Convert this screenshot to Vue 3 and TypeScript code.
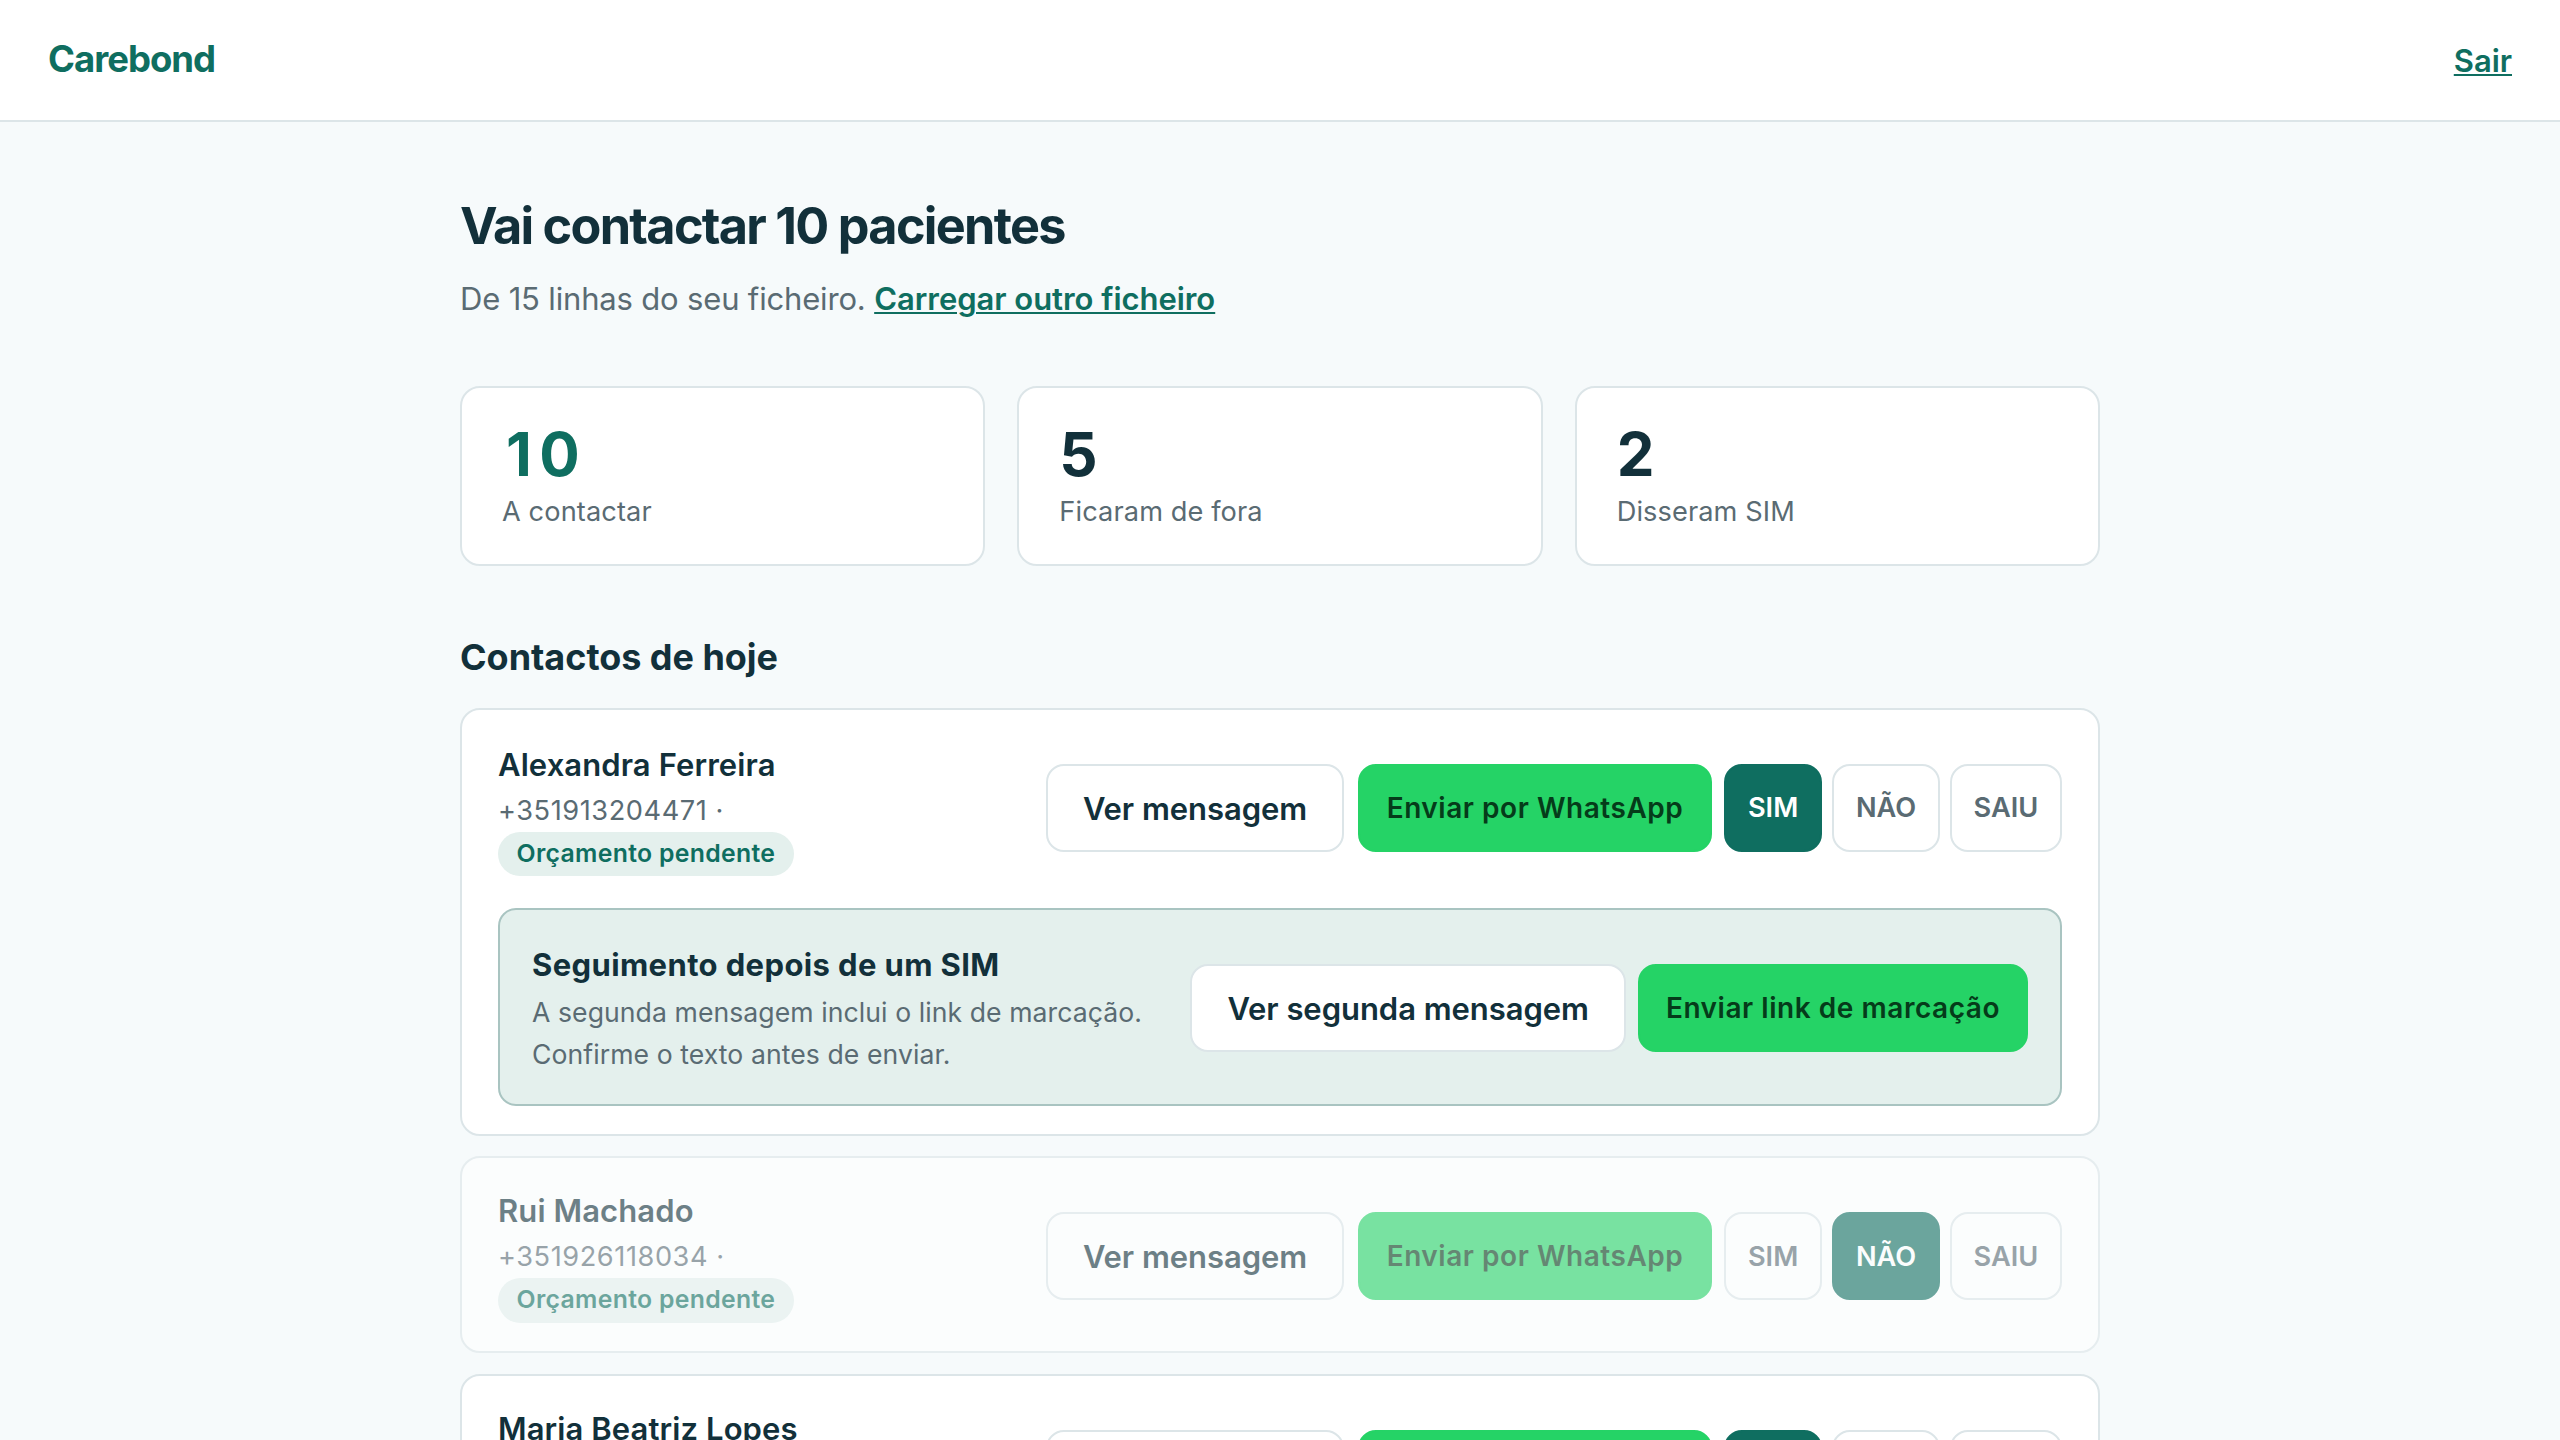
<script setup lang="ts">
interface Contact {
  name: string
  phone: string
  reason: string
  answer: 'SIM' | 'NÃO' | 'SAIU'
  followUp?: boolean
  done?: boolean
}

const stats = [
  { value: 10, label: 'A contactar', accent: true },
  { value: 5, label: 'Ficaram de fora', accent: false },
  { value: 2, label: 'Disseram SIM', accent: false },
]

const answers = ['SIM', 'NÃO', 'SAIU'] as const

const contacts: Contact[] = [
  { name: 'Alexandra Ferreira', phone: '+351913204471', reason: 'Orçamento pendente', answer: 'SIM', followUp: true },
  { name: 'Rui Machado', phone: '+351926118034', reason: 'Orçamento pendente', answer: 'NÃO', done: true },
  { name: 'Maria Beatriz Lopes', phone: '', reason: '', answer: 'SIM' },
]
</script>

<template>
  <div class="page">
    <header class="topbar">
      <span class="brand">Carebond</span>
      <a class="link logout">Sair</a>
    </header>

    <main class="content">
      <h1>Vai contactar 10 pacientes</h1>
      <p class="lead">De 15 linhas do seu ficheiro. <a class="link">Carregar outro ficheiro</a></p>

      <section class="stats">
        <div v-for="s in stats" :key="s.label" class="stat">
          <div class="stat-value" :class="{ accent: s.accent }">{{ s.value }}</div>
          <div class="stat-label">{{ s.label }}</div>
        </div>
      </section>

      <h2>Contactos de hoje</h2>

      <section class="list">
        <article
          v-for="c in contacts"
          :key="c.name"
          class="card"
          :class="{ done: c.done, expanded: c.followUp }"
        >
          <div class="row">
            <div class="who">
              <div class="name">{{ c.name }}</div>
              <div v-if="c.phone" class="phone">{{ c.phone }} ·</div>
              <span v-if="c.reason" class="badge">{{ c.reason }}</span>
            </div>
            <div class="actions">
              <button class="btn view">Ver mensagem</button>
              <button class="btn send">Enviar por WhatsApp</button>
              <div class="answers">
                <button v-for="a in answers" :key="a" class="btn answer" :class="{ on: a === c.answer }">{{ a }}</button>
              </div>
            </div>
          </div>
          <div v-if="c.followUp" class="followup">
            <div>
              <div class="followup-title">Seguimento depois de um SIM</div>
              <p>A segunda mensagem inclui o link de marcação.<br />Confirme o texto antes de enviar.</p>
            </div>
            <div class="actions">
              <button class="btn view">Ver segunda mensagem</button>
              <button class="btn send">Enviar link de marcação</button>
            </div>
          </div>
        </article>
      </section>
    </main>
  </div>
</template>

<style>
body {
  background: #f6fafb;
  overflow: hidden;
}
</style>

<style scoped>
.page {
  height: 1440px;
  overflow: hidden;
  background: #f6fafb;
  color: #12303a;
  font-family: Inter, 'Liberation Sans', sans-serif;
  font-size: 31px;
  line-height: 48px;
}
.topbar {
  display: flex;
  align-items: center;
  justify-content: space-between;
  box-sizing: border-box;
  height: 122px;
  padding: 0 48px;
  background: #fff;
  border-bottom: 2px solid #dce5e8;
}
.brand {
  padding-bottom: 2px;
  color: #0f6e60;
  font-size: 36.5px;
  font-weight: 700;
  letter-spacing: -1px;
}
.link {
  color: #0f6e60;
  font-weight: 600;
  text-decoration: underline;
  text-decoration-thickness: 2px;
  text-underline-offset: 2px;
  letter-spacing: -0.04px;
}
.logout {
  padding-top: 2px;
}
.content {
  width: 1640px;
  margin: 0 auto;
  padding-top: 72px;
}
h1 {
  margin: 0;
  font-size: 50.4px;
  line-height: 64px;
  font-weight: 700;
  letter-spacing: -1.72px;
}
.lead {
  margin: 17px 0 0;
  color: #5a6b73;
  letter-spacing: -0.17px;
}
.stats {
  display: grid;
  grid-template-columns: repeat(3, 1fr);
  gap: 32px;
  margin-top: 63px;
}
.stat {
  box-sizing: border-box;
  height: 180px;
  padding: 34px 40px 0;
  background: #fff;
  border: 2px solid #dce5e8;
  border-radius: 20px;
}
.stat-value {
  font-size: 60px;
  line-height: 64px;
  font-weight: 700;
}
.stat-value.accent {
  padding-left: 4px;
  color: #0f6e60;
  letter-spacing: 7.5px;
}
.stat-label {
  margin-top: 5px;
  color: #5a6b73;
  font-size: 27.2px;
  line-height: 42px;
  letter-spacing: 0.1px;
}
h2 {
  margin: 63px 0 0;
  font-size: 36px;
  line-height: 56px;
  font-weight: 700;
  letter-spacing: -0.03px;
}
.list {
  display: flex;
  flex-direction: column;
  gap: 20.4px;
  margin-top: 23px;
}
.card {
  padding: 28px 36px;
  background: #fff;
  border: 2px solid #dce5e8;
  border-radius: 20px;
}
.card.done {
  opacity: 0.6;
}
.row {
  display: flex;
  align-items: flex-start;
  justify-content: space-between;
}
.who {
  box-sizing: border-box;
  height: 137px;
  padding-top: 1px;
}
.expanded .who {
  height: 139px;
  padding-top: 3px;
}
.name {
  font-weight: 600;
  letter-spacing: 0.1px;
}
.phone {
  margin-top: 1px;
  color: #5a6b73;
  font-size: 27.2px;
  line-height: 42px;
  letter-spacing: 0.56px;
}
.badge {
  display: block;
  width: max-content;
  padding: 0 18.5px 2.4px;
  border-radius: 23px;
  background: #e4f0ed;
  color: #0f6e60;
  font-size: 24.8px;
  line-height: 42px;
  font-weight: 600;
  letter-spacing: 0.32px;
}
.actions {
  display: flex;
  gap: 12px;
}
.row .actions {
  margin-top: 26px;
}
.answers {
  display: flex;
  gap: 10px;
}
.btn {
  box-sizing: border-box;
  height: 88px;
  border: 2px solid #dce5e8;
  border-radius: 18px;
  background: #fff;
  color: #12303a;
  font: 600 28px/1 Inter, 'Liberation Sans', sans-serif;
  white-space: nowrap;
}
.view {
  padding: 1px 35px 0;
  font-size: 31px;
  letter-spacing: -0.05px;
}
.row .view {
  margin-right: 2px;
}
.send {
  padding: 0 26px;
  border-color: #25d366;
  background: #25d366;
  color: #053b1a;
  letter-spacing: 0.54px;
}
.row .send {
  padding: 0 26.5px;
}
.answer {
  min-width: 98.4px;
  padding: 0 21.7px;
  color: #5a6b73;
  font-size: 27.2px;
}
.answer.on {
  border-color: #0f6e60;
  background: #0f6e60;
  color: #fff;
}
.followup {
  display: flex;
  align-items: center;
  justify-content: space-between;
  margin-top: 31px;
  box-sizing: border-box;
  height: 198px;
  padding: 2px 32px 0;
  background: #e4f0ed;
  border: 2px solid #a9c4c1;
  border-radius: 18px;
}
.followup-title {
  font-weight: 700;
  letter-spacing: 0.38px;
}
.followup p {
  margin: 2px 0 0;
  color: #5a6b73;
  font-size: 26.6px;
  line-height: 42px;
  letter-spacing: 0.07px;
}
</style>
